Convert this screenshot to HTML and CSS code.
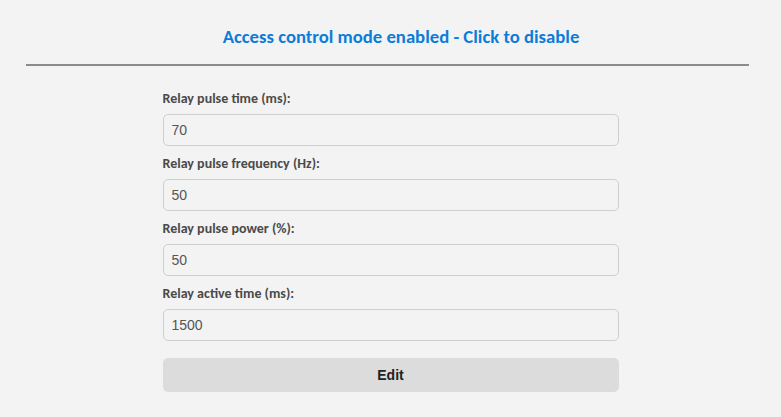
FILE: index.html
```html
<!DOCTYPE html>
<html lang="en">
<head>
    <meta charset="UTF-8">
    <title>Access control</title>
    <link rel="stylesheet" href="styles.css">
</head>
<body>
    <header>
        <a class="mode-toggle" href="#">Access control mode enabled - Click to disable</a>
    </header>
    <hr class="divider">

    <form class="relay-form">
        <label for="pulse-time">Relay pulse time (ms):</label>
        <input type="text" id="pulse-time" value="70">

        <label for="pulse-freq">Relay pulse frequency (Hz):</label>
        <input type="text" id="pulse-freq" value="50">

        <label for="pulse-power">Relay pulse power (%):</label>
        <input type="text" id="pulse-power" value="50">

        <label for="active-time">Relay active time (ms):</label>
        <input type="text" id="active-time" value="1500">

        <button type="button">Edit</button>
    </form>
</body>
</html>
```

FILE: styles.css
```css
body {
    margin: 0;
    background-color: #f3f3f3;
    font-family: Carlito, 'Open Sans', sans-serif;
    color: #444;
}

header {
    text-align: center;
    padding: 25px 0 0 21px;
    height: 39px;
}

.mode-toggle {
    color: #0b7dd8;
    font-size: 18.7px;
    font-weight: bold;
    text-decoration: none;
}

.divider {
    margin: 0 32px 0 26px;
    border: none;
    border-top: 2px solid #8c8c8c;
}

.relay-form {
    width: 456px;
    margin: 0 auto;
    padding-top: 24px;
    display: flex;
    flex-direction: column;
}

label {
    font-size: 14px;
    font-weight: bold;
    color: #4a4a4a;
    height: 18px;
    line-height: 18px;
    margin-bottom: 6px;
}

input {
    height: 32px;
    box-sizing: border-box;
    border: 1px solid #cfcfcf;
    border-radius: 5px;
    background-color: #f3f3f3;
    padding: 0 8px;
    font-family: 'Liberation Sans', Arial, sans-serif;
    font-size: 14px;
    color: #555;
    margin-bottom: 9px;
}

button {
    margin-top: 8px;
    height: 34px;
    border: none;
    border-radius: 5px;
    background-color: #dcdcdc;
    font-family: 'Liberation Sans', Arial, sans-serif;
    font-size: 14px;
    font-weight: bold;
    color: #222;
    cursor: pointer;
}
```
